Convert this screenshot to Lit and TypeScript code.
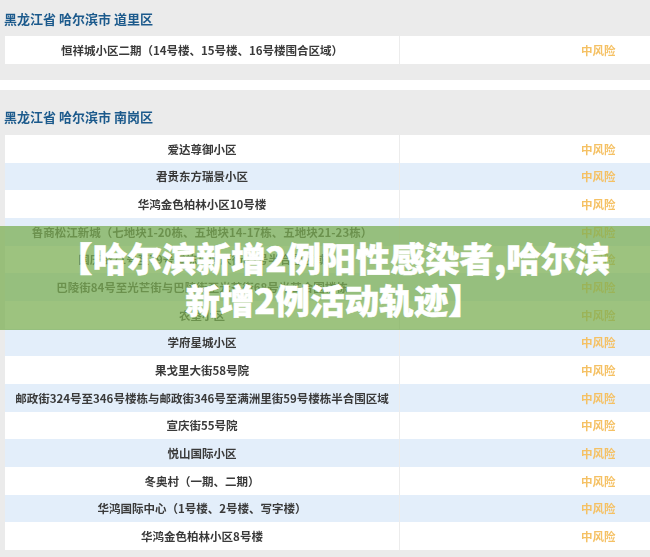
import { LitElement, html, css } from 'lit';
import { customElement } from 'lit/decorators.js';

const ROWS = [
  '爱达尊御小区',
  '君贵东方瑞景小区',
  '华鸿金色柏林小区10号楼',
  '鲁商松江新城（七地块1-20栋、五地块14-17栋、五地块21-23栋）',
  '国庆街71号至79号楼栋与国庆街83号半合围区域',
  '巴陵街84号至光芒街与巴陵街至光芒街68号光芒合围楼栋',
  '农垦小区',
  '学府星城小区',
  '果戈里大街58号院',
  '邮政街324号至346号楼栋与邮政街346号至满洲里街59号楼栋半合围区域',
  '宣庆街55号院',
  '悦山国际小区',
  '冬奥村（一期、二期）',
  '华鸿国际中心（1号楼、2号楼、写字楼）',
  '华鸿金色柏林小区8号楼',
];

@customElement('app-root')
export class AppRoot extends LitElement {
  static styles = css`
    :host {
      display: block;
      position: relative;
      width: 650px;
      height: 557px;
      overflow: hidden;
      background: #ebebeb;
      font-family: "Noto Sans CJK SC", "Liberation Sans", sans-serif;
    }
    .section {
      background: #ebebeb;
      filter: blur(0.35px);
    }
    .first {
      height: 80px;
    }
    .gap {
      height: 10px;
      background: #fff;
    }
    .heading {
      display: flex;
      align-items: center;
      height: 36px;
      padding-left: 4px;
      color: #1c5a8c;
      font-size: 13px;
      font-weight: 700;
    }
    .second .heading {
      box-sizing: border-box;
      height: 45px;
      padding-top: 8px;
    }
    .table {
      margin-left: 5px;
    }
    .row {
      display: grid;
      grid-template-columns: 395px 1fr;
      height: 27.67px;
      background: #fff;
      font-size: 11.5px;
      font-weight: 700;
      color: #3a3a3a;
    }
    .row:nth-child(even) {
      background: #e3eefa;
    }
    .tall {
      height: 28px;
    }
    .name {
      display: flex;
      align-items: center;
      justify-content: center;
      border-right: 1px solid #ececec;
      white-space: nowrap;
    }
    .risk {
      display: flex;
      align-items: center;
      padding-left: 181px;
      color: #f5c164;
    }
    .banner {
      position: absolute;
      left: 0;
      right: 0;
      top: 226px;
      height: 104px;
      display: flex;
      align-items: center;
      justify-content: center;
      background: rgba(124, 175, 84, 0.75);
    }
    .banner h1 {
      margin: 0;
      padding-left: 18px;
      text-align: center;
      white-space: nowrap;
      font-size: 34.6px;
      line-height: 42px;
      font-weight: 900;
      color: #fff;
      -webkit-text-stroke: 0.5px #fff;
    }
  `;

  renderRow(name: string, tall = false) {
    return html`<div class="row ${tall ? 'tall' : ''}">
      <div class="name">${name}</div>
      <div class="risk">中风险</div>
    </div>`;
  }

  render() {
    return html`
      <div class="section first">
        <div class="heading">黑龙江省 哈尔滨市 道里区</div>
        <div class="table">
          ${this.renderRow('恒祥城小区二期（14号楼、15号楼、16号楼围合区域）', true)}
        </div>
      </div>
      <div class="gap"></div>
      <div class="section second">
        <div class="heading">黑龙江省 哈尔滨市 南岗区</div>
        <div class="table">${ROWS.map((r) => this.renderRow(r))}</div>
      </div>
      <div class="banner">
        <h1>【哈尔滨新增2例阳性感染者,哈尔滨<br />新增2例活动轨迹】</h1>
      </div>
    `;
  }
}
